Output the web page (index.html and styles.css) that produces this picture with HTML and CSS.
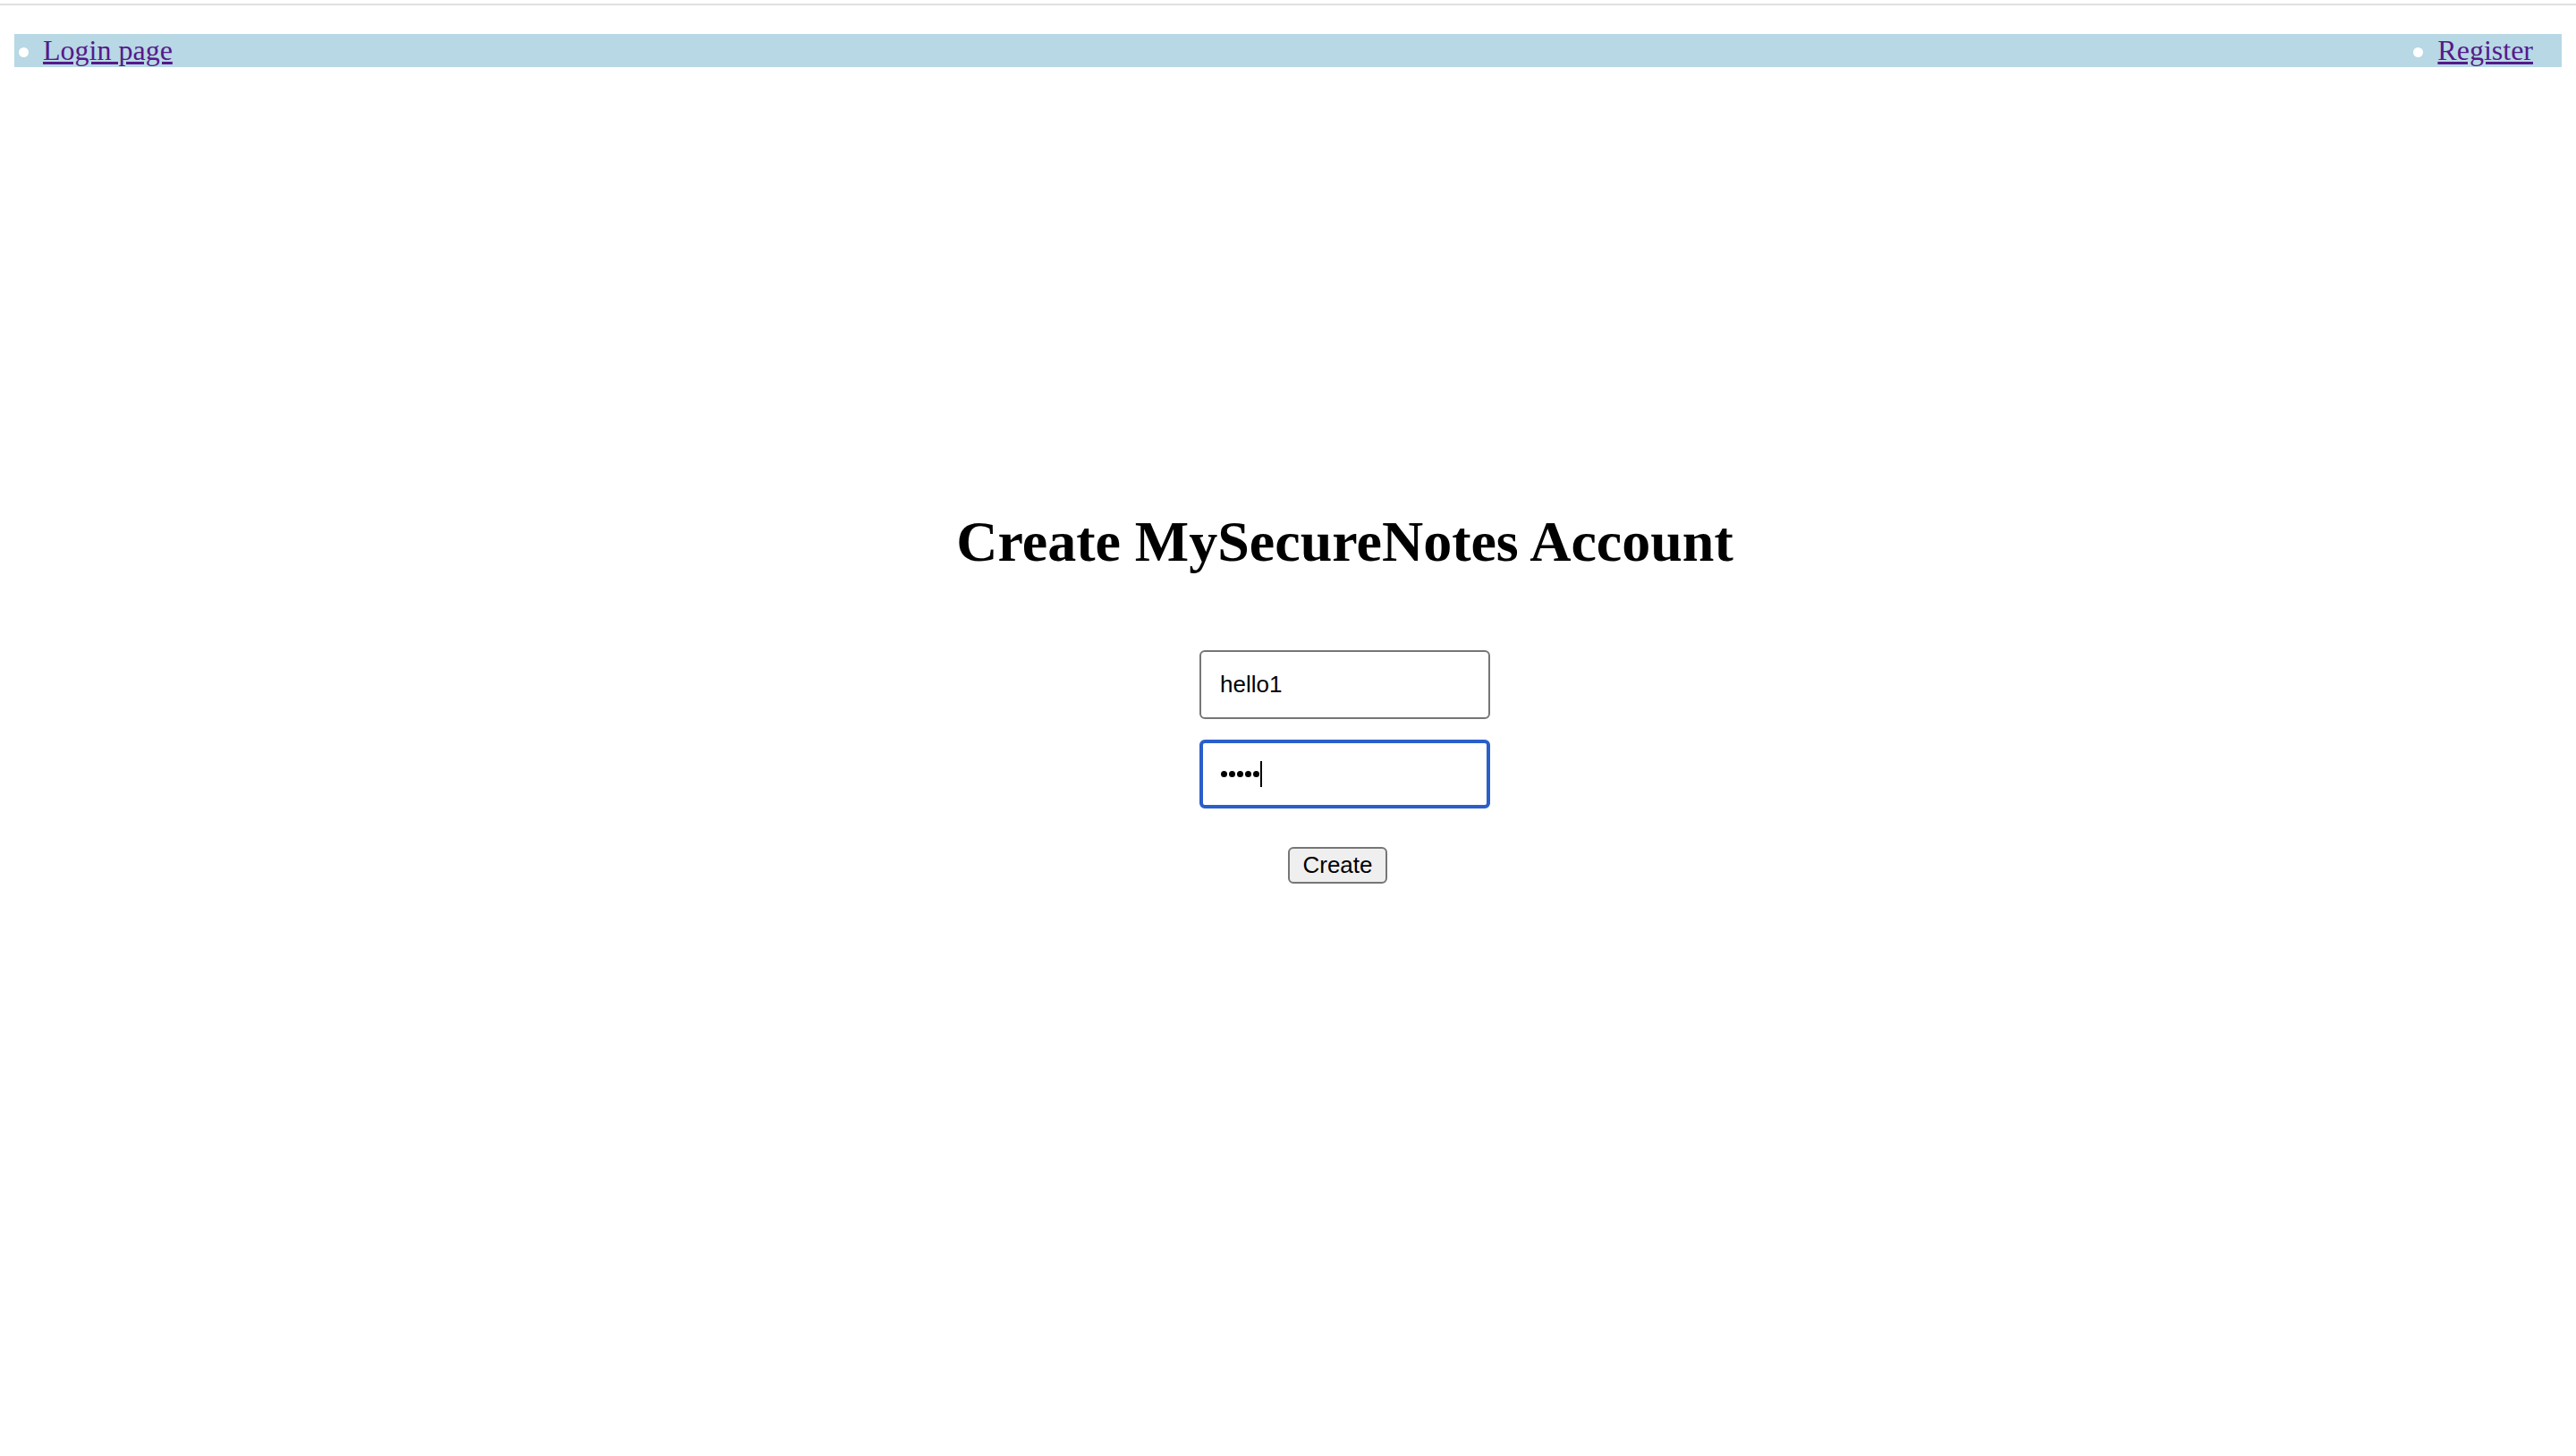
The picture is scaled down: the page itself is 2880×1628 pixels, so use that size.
FILE: index.html
```html
<!DOCTYPE html>
<html lang="en">
<head>
<meta charset="utf-8">
<title>Create MySecureNotes Account</title>
<link rel="stylesheet" href="styles.css">
</head>
<body>
<div class="chrome-edge"></div>
<nav class="nav-wrap">
  <ul class="nav">
    <li class="nav-item"><a href="#login">Login page</a></li>
    <li class="nav-item nav-item--right"><a href="#register">Register</a></li>
  </ul>
</nav>
<main class="main">
  <h1 class="title">Create MySecureNotes Account</h1>
  <form class="form" onsubmit="return false">
    <input class="field" type="text" value="hello1" readonly>
    <div class="field field--focus" aria-label="password">
      <span class="dot"></span><span class="dot"></span><span class="dot"></span><span class="dot"></span><span class="dot"></span><span class="caret"></span>
    </div>
    <button class="btn" type="submit">Create</button>
  </form>
</main>
</body>
</html>
```
FILE: styles.css
```css
html, body {
  margin: 0;
  padding: 0;
  background: #ffffff;
}

body {
  font-family: "Liberation Serif", "Times New Roman", serif;
  color: #000000;
}

.chrome-edge {
  height: 4px;
  border-bottom: 2px solid #e0e0e0;
}

.nav-wrap {
  padding: 32px 16px 0;
}

.nav {
  display: flex;
  justify-content: space-between;
  align-items: center;
  list-style: none;
  margin: 0;
  padding: 0;
  background: #b7d8e4;
  height: 37px;
}

.nav-item {
  display: flex;
  align-items: center;
  font-size: 32px;
  line-height: 37px;
}

.nav-item::before {
  content: "";
  width: 11px;
  height: 11px;
  border-radius: 50%;
  background: #ffffff;
  margin: 3px 16px 0 5px;
}

.nav-item--right {
  padding-right: 32px;
}

.nav-item a {
  color: #551a8b;
  text-decoration: underline;
}

.main {
  margin-top: 495px;
  padding-left: 127px;
  text-align: center;
}

.title {
  margin: 0;
  font-size: 64px;
  line-height: 72px;
  font-weight: bold;
}

.form {
  margin-top: 85px;
  display: flex;
  flex-direction: column;
  align-items: center;
}

.field {
  box-sizing: border-box;
  width: 325px;
  height: 77px;
  margin: 0;
  padding: 0 0 0 21px;
  border: 2px solid #767676;
  border-radius: 6px;
  background: #ffffff;
  font-family: Arial, "Liberation Sans", sans-serif;
  font-size: 26px;
  color: #000000;
  outline: none;
  text-align: left;
}

.field--focus {
  margin-top: 23px;
  border: 4px solid #2a5fc9;
  padding-left: 20px;
  display: flex;
  align-items: center;
}

.dot {
  width: 7px;
  height: 7px;
  border-radius: 50%;
  background: #000000;
  margin-right: 2px;
}

.caret {
  width: 2px;
  height: 29px;
  background: #000000;
  margin-left: -1px;
}

.btn {
  box-sizing: border-box;
  margin: 43px 16px 0 0;
  width: 111px;
  height: 41px;
  padding: 0;
  border: 2px solid #767676;
  border-radius: 6px;
  background: #efefef;
  font-family: Arial, "Liberation Sans", sans-serif;
  font-size: 26px;
  color: #000000;
}
```
